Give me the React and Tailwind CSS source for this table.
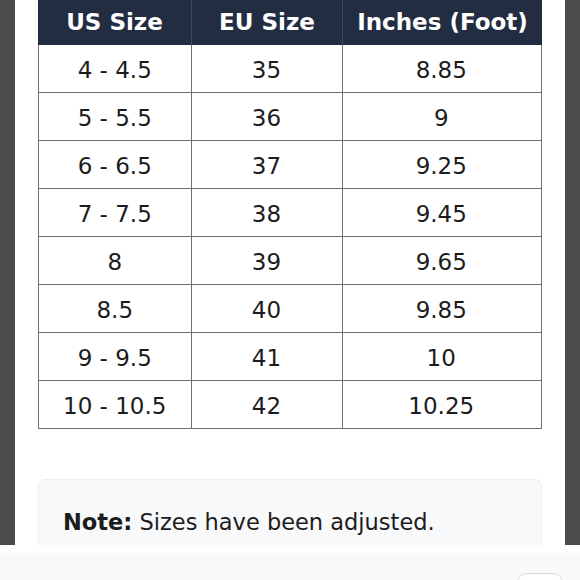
export default function App() {
  const rows = [
    ["4 - 4.5", "35", "8.85"],
    ["5 - 5.5", "36", "9"],
    ["6 - 6.5", "37", "9.25"],
    ["7 - 7.5", "38", "9.45"],
    ["8", "39", "9.65"],
    ["8.5", "40", "9.85"],
    ["9 - 9.5", "41", "10"],
    ["10 - 10.5", "42", "10.25"],
  ];
  return (
    <div className="w-[580px] h-[580px] overflow-hidden bg-white flex flex-col" style={{ fontFamily: '"DejaVu Sans", sans-serif' }}>
      <div className="h-[545px] flex shrink-0">
        <div className="w-[15px] bg-[#4b4b4b]" />
        <div className="flex-1 bg-white px-[23px] overflow-hidden">
          <div className="w-[504px]">
            <div className="grid grid-cols-[154px_151px_199px] h-[45px] bg-[#232d42] text-white font-bold text-[23px]">
              <div className="flex items-center justify-center border-r border-[#3d475a] pb-[1px]">US Size</div>
              <div className="flex items-center justify-center border-r border-[#3d475a] pb-[1px]">EU Size</div>
              <div className="flex items-center justify-center pb-[1px]">Inches (Foot)</div>
            </div>
            <div className="border-l-[1.5px] border-r-[1.5px] border-[#707070]">
              {rows.map((r, i) => (
                <div key={i} className="grid grid-cols-[152.5px_151px_197.5px] h-[48px] border-b-[1.5px] border-[#707070] text-[23px] text-[#1c1c1c]">
                  <div className="flex items-center justify-center border-r-[1.5px] border-[#707070] pt-[4px]">{r[0]}</div>
                  <div className="flex items-center justify-center border-r-[1.5px] border-[#707070] pt-[4px]">{r[1]}</div>
                  <div className="flex items-center justify-center pt-[4px]">{r[2]}</div>
                </div>
              ))}
            </div>
            <div className="mt-[50px] h-[100px] rounded-[7px] border border-[#eceef1] bg-[#f8f9fb] pl-[24px] pt-[26px] text-[22.5px] text-[#1c1c1c]">
              <span className="font-bold">Note:</span> Sizes have been adjusted.
            </div>
          </div>
        </div>
        <div className="w-[15px] bg-[#4b4b4b]" />
      </div>
      <div className="h-[8px] bg-white shrink-0" />
      <div className="flex-1 bg-[#fbf8f8] flex justify-end items-start pr-[17px] pt-[20px]">
        <div className="w-[46px] h-[30px] rounded-[10px] border border-[#d8d8d8] bg-white" />
      </div>
    </div>
  );
}
